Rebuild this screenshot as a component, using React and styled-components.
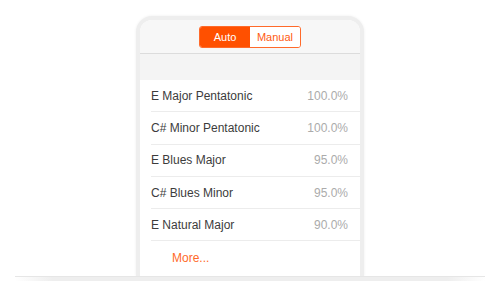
import React from "react";
import styled, { createGlobalStyle } from "styled-components";

const GlobalStyle = createGlobalStyle`
  html, body {
    margin: 0;
    padding: 0;
    background: #ffffff;
    font-family: "Liberation Sans", Arial, sans-serif;
  }
`;

const Page = styled.div`
  width: 500px;
  height: 281px;
  overflow: hidden;
  display: flex;
  flex-direction: column;
  align-items: center;
  padding-top: 16px;
  box-sizing: border-box;
`;

const Phone = styled.div`
  width: 220px;
  height: 256px;
  border: 4px solid #eeeeee;
  border-bottom: 0;
  border-radius: 16px 16px 0 0;
  box-shadow: 0 0 3px rgba(0, 0, 0, 0.07);
  overflow: hidden;
  display: flex;
  flex-direction: column;
  background: #ffffff;
  flex-shrink: 0;
`;

const Header = styled.div`
  height: 33px;
  flex-shrink: 0;
  background: #f7f7f7;
  border-bottom: 1px solid #dcdcdc;
  display: flex;
  align-items: center;
  justify-content: center;
`;

const Segmented = styled.div`
  display: flex;
  border: 1px solid #ff6a2a;
  border-radius: 3px;
  overflow: hidden;
`;

const Segment = styled.div`
  width: 50px;
  height: 20px;
  display: flex;
  align-items: center;
  justify-content: center;
  font-size: 11px;
  background: ${(p) => (p.active ? "#ff5000" : "#ffffff")};
  color: ${(p) => (p.active ? "#ffffff" : "#ff5a12")};
`;

const Spacer = styled.div`
  height: 26px;
  flex-shrink: 0;
  background: #f4f4f4;
`;

const List = styled.div`
  display: flex;
  flex-direction: column;
  padding-left: 11px;
`;

const Row = styled.div`
  height: 32.3px;
  flex-shrink: 0;
  display: flex;
  align-items: center;
  justify-content: space-between;
  padding-right: 12px;
  border-bottom: ${(p) => (p.last ? "0" : "1px solid #ececec")};
  box-sizing: border-box;
  font-size: 12px;
`;

const Name = styled.span`
  color: #3c3c3c;
`;

const Score = styled.span`
  color: #ababab;
`;

const More = styled.span`
  color: #ff6a2a;
  padding-left: 21px;
`;

const Base = styled.div`
  width: 470px;
  height: 9px;
  flex-shrink: 0;
  background: linear-gradient(
    to right,
    rgba(236, 236, 236, 0),
    #eeeeee 8%,
    #eeeeee 92%,
    rgba(236, 236, 236, 0)
  );
  border-top: 1px solid #e6e6e6;
`;

const scales = [
  ["E Major Pentatonic", "100.0%"],
  ["C# Minor Pentatonic", "100.0%"],
  ["E Blues Major", "95.0%"],
  ["C# Blues Minor", "95.0%"],
  ["E Natural Major", "90.0%"],
];

export default function App() {
  return (
    <>
      <GlobalStyle />
      <Page>
        <Phone>
          <Header>
            <Segmented>
              <Segment active>Auto</Segment>
              <Segment>Manual</Segment>
            </Segmented>
          </Header>
          <Spacer />
          <List>
            {scales.map(([name, score]) => (
              <Row key={name}>
                <Name>{name}</Name>
                <Score>{score}</Score>
              </Row>
            ))}
            <Row last>
              <More>More...</More>
            </Row>
          </List>
        </Phone>
        <Base />
      </Page>
    </>
  );
}
